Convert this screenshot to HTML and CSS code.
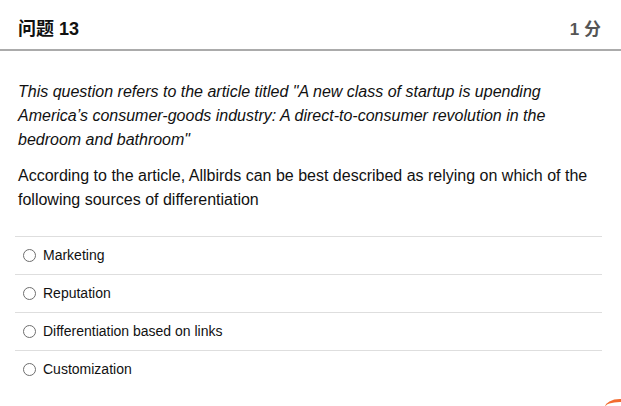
FILE: index.html
```html
<!DOCTYPE html>
<html>
<head>
<meta charset="utf-8">
<link rel="stylesheet" href="styles.css">
</head>
<body>
<div class="quiz">
  <div class="header">
    <div class="title">问题 13</div>
    <div class="points">1 分</div>
  </div>
  <div class="content">
    <p class="intro">This question refers to the article titled "A new class of startup is upending America’s consumer-goods industry: A direct-to-consumer revolution in the bedroom and bathroom"</p>
    <p class="prompt">According to the article, Allbirds can be best described as relying on which of the following sources of differentiation</p>
  </div>
  <div class="options">
    <label class="option"><span class="radio"></span><span>Marketing</span></label>
    <label class="option"><span class="radio"></span><span>Reputation</span></label>
    <label class="option"><span class="radio"></span><span>Differentiation based on links</span></label>
    <label class="option"><span class="radio"></span><span>Customization</span></label>
  </div>
  <div class="corner"></div>
</div>
</body>
</html>
```
FILE: styles.css
```css
html, body {
  margin: 0;
  padding: 0;
  background: #fff;
}
body {
  font-family: "Liberation Sans", Arial, "Noto Sans CJK SC", sans-serif;
  color: #111;
}
.quiz {
  position: relative;
  width: 621px;
  height: 406px;
  overflow: hidden;
}
.header {
  box-sizing: border-box;
  height: 51px;
  padding: 5px 20px 0 18px;
  display: flex;
  align-items: center;
  justify-content: space-between;
  border-bottom: 2px solid #ababab;
}
.title {
  font-weight: bold;
  font-size: 18px;
  color: #111;
}
.points {
  font-weight: bold;
  font-size: 17px;
  color: #555;
}
.content {
  padding: 29px 18px 0 18px;
}
.content p {
  margin: 0;
  font-size: 16px;
  line-height: 24px;
}
.intro {
  font-style: italic;
}
.prompt {
  margin-top: 12px !important;
}
.options {
  margin: 24px 19px 0 15px;
  display: flex;
  flex-direction: column;
}
.option {
  box-sizing: border-box;
  height: 38px;
  border-top: 1px solid #dedede;
  display: flex;
  align-items: center;
  padding: 0 0 2px 8px;
  gap: 7px;
  font-size: 14px;
  color: #111;
}
.radio {
  box-sizing: border-box;
  width: 13px;
  height: 13px;
  border: 1px solid #6e6e6e;
  border-radius: 50%;
  background: #fff;
  margin-top: 2px;
}
.corner {
  position: absolute;
  right: -14px;
  bottom: -10px;
  width: 30px;
  height: 14px;
  border-radius: 50%;
  border-top: 3px solid #f26b2e;
}
```
